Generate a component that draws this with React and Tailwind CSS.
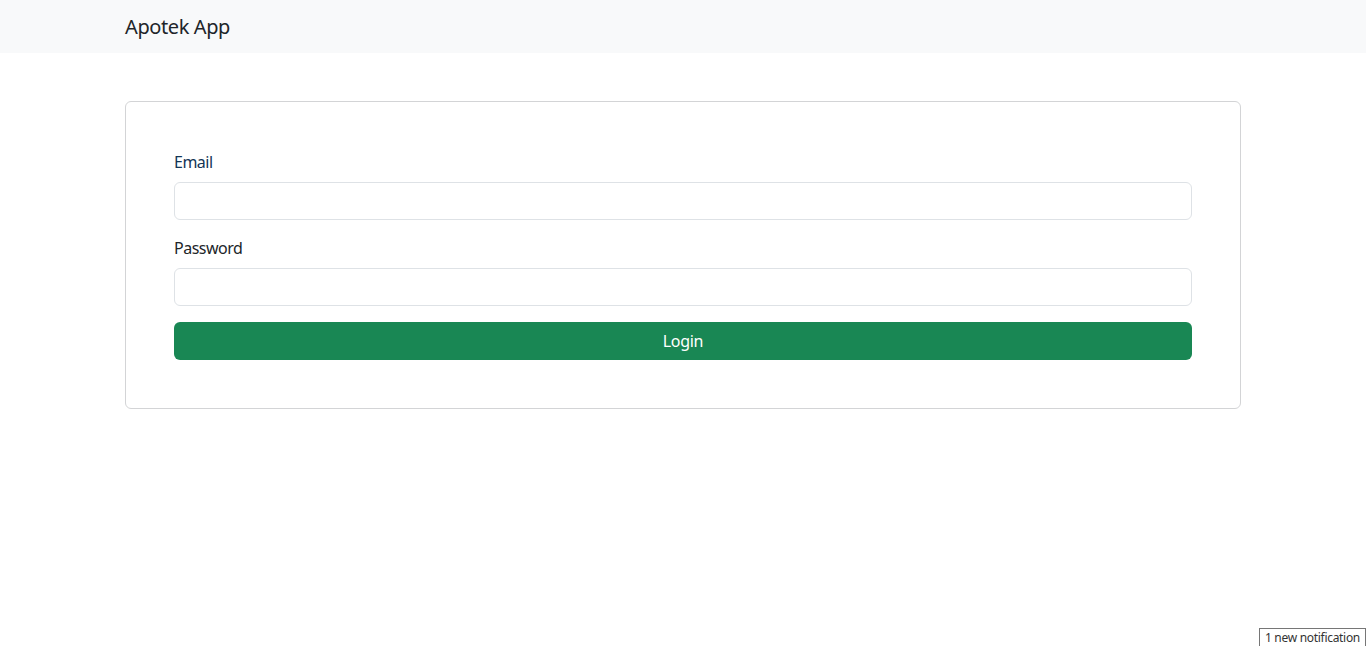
import React from 'react';

const App = () => {
  return (
    <div className="relative min-h-[646px] bg-white text-[#212529]" style={{ fontFamily: '"Noto Sans", "Open Sans", sans-serif' }}>
      <nav className="bg-[#f8f9fa] h-[53px]">
        <div className="max-w-[1140px] mx-auto px-3 h-full flex items-center">
          <span className="text-[20px] leading-[30px] tracking-[-0.4px]">Apotek App</span>
        </div>
      </nav>

      <div className="max-w-[1140px] mx-auto px-3 mt-12">
        <div className="border border-[#d3d4d6] rounded-[6px] p-12">
          <form>
            <div className="mb-4">
              <label className="block text-[16px] leading-6 mb-2 tracking-[-0.5px] text-[#143556]">Email</label>
              <input type="email" className="block w-full h-[38px] border border-[#dee2e6] rounded-[6px] px-3" />
            </div>
            <div className="mb-4">
              <label className="block text-[16px] leading-6 mb-2 tracking-[-0.5px]">Password</label>
              <input type="password" className="block w-full h-[38px] border border-[#dee2e6] rounded-[6px] px-3" />
            </div>
            <button type="button" className="w-full h-[38px] bg-[#198754] text-white text-[16px] tracking-[-0.3px] rounded-[6px]">
              Login
            </button>
          </form>
        </div>
      </div>

      <div className="absolute right-0 bottom-0 bg-white border border-[#767676] border-b-0 px-[5px] text-[12px] leading-[17px] tracking-[-0.3px] text-[#333]">
        1 new notification
      </div>
    </div>
  );
};

export default App;
